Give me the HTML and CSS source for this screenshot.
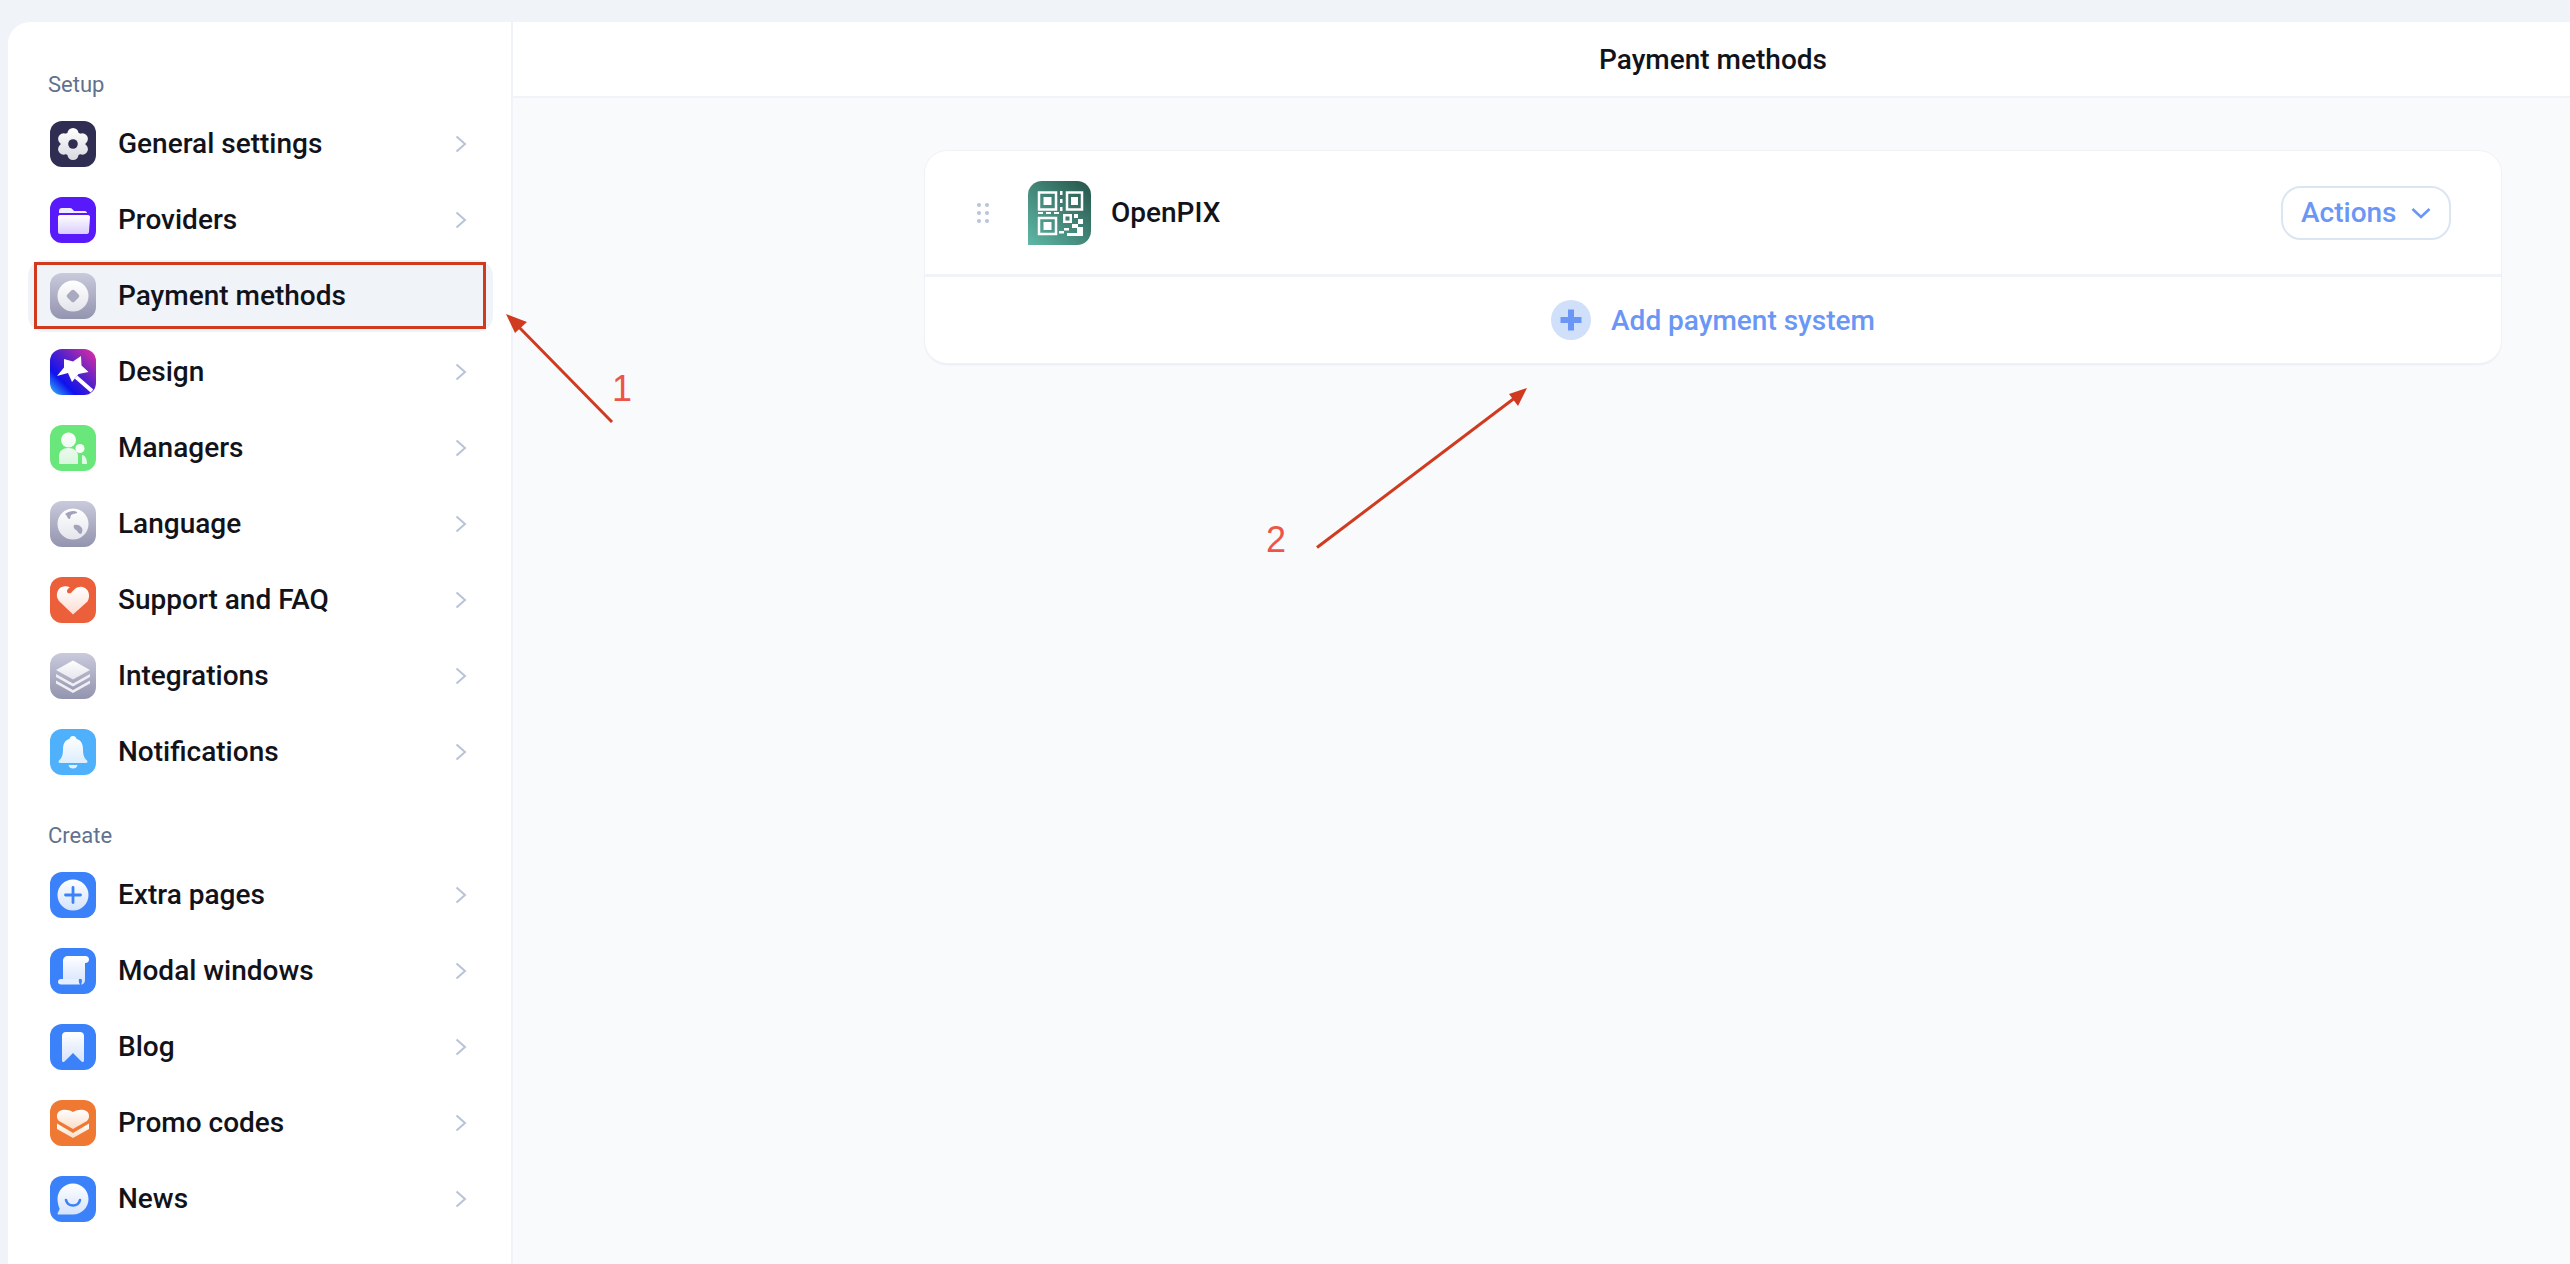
FILE: index.html
```html
<!DOCTYPE html>
<html lang="en">
<head>
<meta charset="utf-8">
<title>Payment methods</title>
<link rel="stylesheet" href="styles.css">
</head>
<body>
<svg class="defs" width="0" height="0" aria-hidden="true">
  <defs>
    <linearGradient id="gw" gradientUnits="userSpaceOnUse" x1="0" y1="7" x2="0" y2="39"><stop offset="0" stop-color="#fff"/><stop offset="1" stop-color="#d8d9e0"/></linearGradient>
    <linearGradient id="gv" x1="0" y1="0" x2="0" y2="1"><stop offset="0" stop-color="#fff"/><stop offset="1" stop-color="#d9cdfd"/></linearGradient>
    <linearGradient id="gg" x1="0" y1="0" x2="0" y2="1"><stop offset="0" stop-color="#c9cadc"/><stop offset="1" stop-color="#9394ae"/></linearGradient>
    <linearGradient id="gc" x1="0" y1="0" x2="0" y2="1"><stop offset="0" stop-color="#fff"/><stop offset="1" stop-color="#e4e5ec"/></linearGradient>
    <linearGradient id="gd" x1="1" y1="0" x2="0" y2="1"><stop offset="0" stop-color="#e82ea0"/><stop offset=".42" stop-color="#5a22c8"/><stop offset=".72" stop-color="#1011ee"/><stop offset="1" stop-color="#38c6fb"/></linearGradient>
    <linearGradient id="gm" gradientUnits="userSpaceOnUse" x1="0" y1="7" x2="0" y2="39"><stop offset="0" stop-color="#fff"/><stop offset="1" stop-color="#d9f6dd"/></linearGradient>
    <linearGradient id="gr" x1="0" y1="0" x2="0" y2="1"><stop offset="0" stop-color="#fff"/><stop offset="1" stop-color="#fcdcd2"/></linearGradient>
    <linearGradient id="gb" x1="0" y1="0" x2="0" y2="1"><stop offset="0" stop-color="#fff"/><stop offset="1" stop-color="#d4e3fc"/></linearGradient>
    <linearGradient id="gs" x1="0" y1="0" x2="0" y2="1"><stop offset="0" stop-color="#fff"/><stop offset="1" stop-color="#dceefe"/></linearGradient>
    <linearGradient id="go" x1="0" y1="0" x2="0" y2="1"><stop offset="0" stop-color="#fff"/><stop offset="1" stop-color="#fbdcc6"/></linearGradient>
    <linearGradient id="gq" x1="1" y1="0" x2="0" y2="1"><stop offset="0" stop-color="#26544a"/><stop offset="1" stop-color="#5fb8a6"/></linearGradient>
    <symbol id="chev" viewBox="0 0 12 18"><path d="M1.500 1.500L10 9l-8.500 7.500" fill="none" stroke="#b6c3d9" stroke-width="2"/></symbol>
  </defs>
</svg>
<div class="app">
  <aside class="sidebar">
    <h2 class="group first">Setup</h2>
    <ul class="menu">
      <li class="item">
        <svg class="ico" viewBox="0 0 46 46"><rect width="46" height="46" rx="12" fill="#2f2e52"/><g fill="url(#gw)"><circle cx="23" cy="23" r="12.500"/><circle cx="23" cy="12.500" r="5.500"/><circle cx="23" cy="33.500" r="5.500"/><circle cx="13.600" cy="17.800" r="5.500"/><circle cx="32.400" cy="17.800" r="5.500"/><circle cx="13.600" cy="28.200" r="5.500"/><circle cx="32.400" cy="28.200" r="5.500"/></g><circle cx="23" cy="23" r="4.800" fill="#2f2e52"/></svg>
        <span class="label">General settings</span>
        <svg class="chev"><use href="#chev"/></svg>
      </li>
      <li class="item">
        <svg class="ico" viewBox="0 0 46 46"><rect width="46" height="46" rx="12" fill="#5819fb"/><path d="M9 14c0-2 1-3 3-3h8c2 0 3 2 4 3h11c1 0 2 1 2 2H9z" fill="#f1ecff"/><path d="M8 20c0-1 .6-2 2-2h28c1.200 0 2 1 2 2l-1 15c-.1 1.200-1 2-2 2H10c-1.200 0-1.900-.8-2-2z" fill="url(#gv)"/></svg>
        <span class="label">Providers</span>
        <svg class="chev"><use href="#chev"/></svg>
      </li>
      <li class="item active">
        <svg class="ico" viewBox="0 0 46 46"><rect width="46" height="46" rx="12" fill="url(#gg)"/><circle cx="23" cy="23" r="15.500" fill="url(#gc)"/><rect x="18" y="18" width="10" height="10" rx="2" transform="rotate(45 23 23)" fill="#a9aabf"/></svg>
        <span class="label">Payment methods</span>
      </li>
      <li class="item">
        <svg class="ico" viewBox="0 0 46 46"><rect width="46" height="46" rx="12" fill="url(#gd)"/><path d="M14 10L23 12.500 31 7l.5 9.500L38.500 23l-10 2L22 33l-4-9L7 27l7-8.500z" fill="#fff"/><path d="M26 28l16 14" stroke="#fff" stroke-width="4"/></svg>
        <span class="label">Design</span>
        <svg class="chev"><use href="#chev"/></svg>
      </li>
      <li class="item">
        <svg class="ico" viewBox="0 0 46 46"><rect width="46" height="46" rx="12" fill="#6ae77b"/><circle cx="18.500" cy="15" r="7.500" fill="url(#gm)"/><path d="M9 39V31c0-5 4-8 9.500-8s9.500 3 9.500 8v8z" fill="url(#gm)"/><circle cx="30" cy="23.500" r="4.500" fill="#f6fdf7"/><path d="M32 30c3 .5 5 3.500 5 9h-5z" fill="#e2f9e5"/></svg>
        <span class="label">Managers</span>
        <svg class="chev"><use href="#chev"/></svg>
      </li>
      <li class="item">
        <svg class="ico" viewBox="0 0 46 46"><rect width="46" height="46" rx="12" fill="url(#gg)"/><circle cx="23" cy="23" r="15.500" fill="url(#gc)"/><path d="M15 13c4-3 9-4 12-2 1 2-3 1-6 3-1 2 0 4-2 4-2-1-2-4-4-5z" fill="#a2a3bb"/><path d="M24 24c3-1 6 0 8 3 1 2 0 5-1 6-3 0-3-3-5-4-2-1-3-3-2-5z" fill="#a2a3bb"/></svg>
        <span class="label">Language</span>
        <svg class="chev"><use href="#chev"/></svg>
      </li>
      <li class="item">
        <svg class="ico" viewBox="0 0 46 46"><rect width="46" height="46" rx="12" fill="#ec5f3b"/><path d="M23 37.500L10 25c-4-4-4-9-1-13 2.500-3 7.500-3.500 11-1.500-2 1-3.200 2.500-3 4 .3 2 3 2.500 4.500 1 2.500-3 6-6.500 11-5.500 6 1 8.500 9 5 14.500z" fill="url(#gr)"/></svg>
        <span class="label">Support and FAQ</span>
        <svg class="chev"><use href="#chev"/></svg>
      </li>
      <li class="item">
        <svg class="ico" viewBox="0 0 46 46"><rect width="46" height="46" rx="12" fill="url(#gg)"/><path d="M23 7.500L40 17 23 26.500 6 17z" fill="url(#gc)"/><path d="M6 21l17 9.500L40 21v3L23 33.500 6 24z" fill="#eeeef4"/><path d="M6 27.500L23 37l17-9.500v3L23 40 6 30.500z" fill="#eeeef4"/></svg>
        <span class="label">Integrations</span>
        <svg class="chev"><use href="#chev"/></svg>
      </li>
      <li class="item">
        <svg class="ico" viewBox="0 0 46 46"><rect width="46" height="46" rx="12" fill="#4fb0fb"/><path d="M23 7c2 0 3 1.200 3.500 2.800 4.500 1.500 6.500 5.200 6.500 10.200 0 6 1 9 4 11.500 1 1.500.5 2.500-1 2.500H10c-1.500 0-2-1-1-2.500 3-2.500 4-5.500 4-11.500 0-5 2-8.700 6.500-10.200C20 8.200 21 7 23 7z" fill="url(#gs)"/><path d="M18.500 36h9c-.5 2.500-2 3.500-4.500 3.500s-4-1-4.500-3.500z" fill="#e3f1fe"/></svg>
        <span class="label">Notifications</span>
        <svg class="chev"><use href="#chev"/></svg>
      </li>
    </ul>
    <h2 class="group">Create</h2>
    <ul class="menu">
      <li class="item">
        <svg class="ico" viewBox="0 0 46 46"><rect width="46" height="46" rx="12" fill="#3b82fa"/><circle cx="23" cy="23" r="15.500" fill="url(#gb)"/><path d="M23 15.500v15M15.500 23h15" stroke="#3b82fa" stroke-width="2.800" stroke-linecap="round"/></svg>
        <span class="label">Extra pages</span>
        <svg class="chev"><use href="#chev"/></svg>
      </li>
      <li class="item">
        <svg class="ico" viewBox="0 0 46 46"><rect width="46" height="46" rx="12" fill="#3b82fa"/><path d="M13 31V13c0-3 2-5 5-5h17.500c2 0 3.500 1.500 3.500 3.500S37.500 15 35.500 15H35v17c0 2.500-1.500 4.500-4 4.500 1-1.500 1.200-3.500.5-5.500z" fill="url(#gb)"/><path d="M8 34c0-1.800 1.200-3 3-3h18c-.5 2 0 4 1 5.500H11c-1.800 0-3-1-3-2.500z" fill="#e6efff"/></svg>
        <span class="label">Modal windows</span>
        <svg class="chev"><use href="#chev"/></svg>
      </li>
      <li class="item">
        <svg class="ico" viewBox="0 0 46 46"><rect width="46" height="46" rx="12" fill="#3b82fa"/><path d="M12 12c0-2.500 1.500-4 4-4h14c2.500 0 4 1.500 4 4v24.500c0 1.500-1.500 2-2.500 1L23 29l-8.500 8.500c-1 1-2.500.5-2.500-1z" fill="url(#gb)"/></svg>
        <span class="label">Blog</span>
        <svg class="chev"><use href="#chev"/></svg>
      </li>
      <li class="item">
        <svg class="ico" viewBox="0 0 46 46"><rect width="46" height="46" rx="12" fill="#ef7832"/><path d="M23 29L9 21c-2.500-2-3-7 0-9.500 3-2.500 9-2.500 14 .5 5-3 11-3 14-.5 3 2.500 2.500 7.500 0 9.500z" fill="url(#go)"/><path d="M7 23.500l16 9.500 16-9.500v5.500L23 38 7 29z" fill="url(#go)"/></svg>
        <span class="label">Promo codes</span>
        <svg class="chev"><use href="#chev"/></svg>
      </li>
      <li class="item">
        <svg class="ico" viewBox="0 0 46 46"><rect width="46" height="46" rx="12" fill="#3b82fa"/><path d="M23 7.500c8.600 0 15.500 6.900 15.500 15.500S31.600 38.500 23 38.500H8.500c-1 0-1.200-.8-.8-1.500l2-4C8.500 30 7.500 26.500 7.500 23 7.500 14.400 14.400 7.500 23 7.500z" fill="url(#gb)"/><path d="M16 24c1 4 4 5.500 7 5.500s6-1.500 7-5.500" fill="none" stroke="#3b82fa" stroke-width="2.600" stroke-linecap="round"/></svg>
        <span class="label">News</span>
        <svg class="chev"><use href="#chev"/></svg>
      </li>
    </ul>
  </aside>
  <main class="main">
    <header class="topbar">Payment methods</header>
    <div class="content">
      <section class="card">
        <div class="row">
          <svg class="grip" viewBox="0 0 12 20"><g fill="#b9c4d9"><circle cx="2" cy="2" r="2"/><circle cx="10" cy="2" r="2"/><circle cx="2" cy="10" r="2"/><circle cx="10" cy="10" r="2"/><circle cx="2" cy="18" r="2"/><circle cx="10" cy="18" r="2"/></g></svg>
          <svg class="qr" viewBox="0 0 63 64">
            <path d="M14 0h35a14 14 0 0 1 14 14v36a14 14 0 0 1-14 14H0V14A14 14 0 0 1 14 0z" fill="url(#gq)"/>
            <g fill="none" stroke="#fff" stroke-width="2.500"><rect x="11" y="11.500" width="17" height="17"/><rect x="39" y="11.500" width="15" height="17"/><rect x="11" y="37" width="17" height="16"/></g>
            <g fill="#fff"><rect x="15.500" y="16" width="8" height="8"/><rect x="43" y="16" width="7" height="8"/><rect x="15.500" y="41" width="8" height="8"/><rect x="32" y="10" width="2.500" height="4"/><rect x="32" y="18" width="2.500" height="4"/><rect x="32" y="26" width="2.500" height="4"/><rect x="10" y="31" width="5" height="2"/><rect x="18" y="31" width="5" height="2"/><rect x="26" y="31" width="5" height="2"/><rect x="35" y="33" width="9" height="9"/><rect x="46" y="33" width="4" height="4"/><rect x="50" y="38" width="5" height="5"/><rect x="44" y="43" width="6" height="4"/><rect x="49" y="46" width="6" height="9"/><rect x="36" y="47" width="5" height="2.500"/><rect x="31" y="50" width="5" height="2.500"/><rect x="39" y="52" width="10" height="3"/></g>
            <rect x="37.500" y="35.500" width="4" height="4" fill="#3f7d6f"/>
          </svg>
          <span class="name">OpenPIX</span>
          <button class="actions" type="button">Actions
            <svg class="caret" viewBox="0 0 20 12"><path d="M1.500 2l8.500 8 8.500-8" fill="none" stroke="#6a97f5" stroke-width="2.600"/></svg>
          </button>
        </div>
        <div class="add">
          <span class="add-ico"><svg viewBox="0 0 24 24"><path d="M12 1.500v21M1.500 12h21" stroke="#6a97f5" stroke-width="6"/></svg></span>
          <span class="add-text">Add payment system</span>
        </div>
      </section>
    </div>
  </main>
</div>
<div class="mark"></div>
<svg class="arrows" viewBox="0 0 2570 1264" aria-hidden="true">
  <path d="M612 422L512 320" stroke="#d03b20" stroke-width="3" fill="none"/>
  <path d="M506 314l21 8-12 11z" fill="#d03b20"/>
  <path d="M1317 547.500L1516 397" stroke="#d03b20" stroke-width="3" fill="none"/>
  <path d="M1527 388l-9 18-9-12z" fill="#d03b20"/>
</svg>
<span class="num num1">1</span>
<span class="num num2">2</span>
</body>
</html>
```
FILE: styles.css
```css
* { box-sizing: border-box; }
html, body { margin: 0; padding: 0; }
body {
  width: 2570px; height: 1264px; overflow: hidden; position: relative;
  background: #f0f3f8;
  font-family: Roboto, "Liberation Sans", sans-serif;
  color: #12131a;
}
.defs { position: absolute; }
.app { display: flex; height: 1264px; padding: 22px 0 0 8px; }
.sidebar {
  width: 505px; flex: none; background: #fff;
  border-right: 2px solid #f0f3f8;
  border-radius: 22px 0 0 0;
  padding: 0 18px 0 20px;
}
.group {
  font-size: 22px; font-weight: 400; line-height: 26px;
  color: #62718d; padding-left: 20px; margin: 35px 0 10px;
}
.group.first { margin-top: 50px; margin-bottom: 10px; }
.menu { list-style: none; margin: 0; padding: 0; }
.item {
  display: flex; align-items: center; height: 72px; margin-bottom: 4px;
  padding: 0 26px 0 22px; border-radius: 16px;
}
.item.active { background: #f0f3f8; }
.ico { width: 46px; height: 46px; flex: none; margin-right: 22px; }
.label { flex: 1; font-size: 28px; font-weight: 500; line-height: 36px; }
.chev { width: 12px; height: 18px; flex: none; }
.main { flex: 1; display: flex; flex-direction: column; min-width: 0; }
.topbar {
  height: 76px; flex: none; background: #fff;
  border-bottom: 2px solid #f0f3f8;
  display: flex; align-items: center; justify-content: center;
  font-size: 28px; font-weight: 500;
  padding: 0 69px 0 412px;
}
.content { flex: 1; background: #f9fafc; padding: 53px 69px 0 412px; }
.card {
  background: #fff; border-radius: 22px; height: 212px;
  box-shadow: 0 0 0 1px #f0f2f8, 0 2px 2px #e8ebf3;
}
.row {
  height: 126px; display: flex; align-items: center;
  border-bottom: 3px solid #f0f3f8; padding: 0 50px 0 52px;
}
.grip { width: 12px; height: 20px; flex: none; margin-right: 39px; }
.qr { width: 63px; height: 64px; flex: none; margin-right: 20px; }
.name { flex: 1; font-size: 28px; font-weight: 500; }
.actions {
  display: flex; align-items: center; gap: 14px;
  height: 54px; width: 170px; padding: 0 0 0 18px;
  background: #fff; border: 2px solid #dce5f2; border-radius: 20px;
  color: #6a97f5; font: 500 28px Roboto, "Liberation Sans", sans-serif;
}
.caret { width: 20px; height: 12px; }
.add {
  height: 86px; display: flex; align-items: center; justify-content: center; gap: 20px;
  color: #6a97f5; font-size: 28px; font-weight: 500;
}
.add-ico {
  width: 40px; height: 40px; border-radius: 50%; background: #d0dffa;
  display: flex; align-items: center; justify-content: center;
}
.add-ico svg { width: 24px; height: 24px; }
.mark {
  position: absolute; left: 34px; top: 262px; width: 452px; height: 67px;
  border: 3px solid #d03b20;
}
.arrows { position: absolute; left: 0; top: 0; width: 2570px; height: 1264px; pointer-events: none; }
.num {
  position: absolute; font-family: "Liberation Sans", sans-serif;
  font-size: 36px; line-height: 40px; color: #ec5548;
}
.num1 { left: 612px; top: 369px; }
.num2 { left: 1266px; top: 520px; }
```
